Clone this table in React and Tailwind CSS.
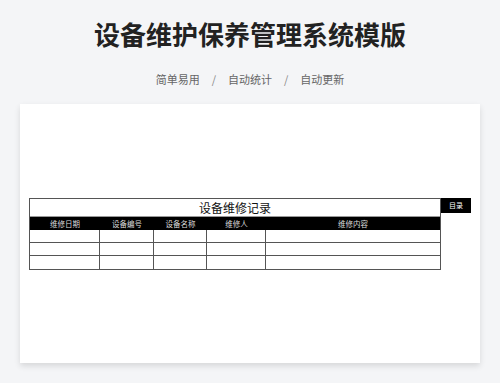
const cols = ["维修日期", "设备编号", "设备名称", "维修人", "维修内容"];
const widths = ["w-[70px]", "w-[54px]", "w-[53px]", "w-[59px]", "flex-1"];

export default function App() {
  return (
    <div
      className="w-[500px] h-[383px] bg-[#f4f5f7] overflow-hidden flex flex-col items-center"
      style={{ fontFamily: '"Noto Sans CJK SC", "Noto Sans", sans-serif' }}
    >
      <h1 className="mt-[16px] text-[26px] leading-[36px] font-bold text-[#222]">
        设备维护保养管理系统模版
      </h1>
      <div className="mt-[19px] flex items-center text-[11px] leading-[16px] text-[#666]">
        <span>简单易用</span>
        <span className="mx-[12px] text-[#888]">/</span>
        <span>自动统计</span>
        <span className="mx-[12px] text-[#888]">/</span>
        <span>自动更新</span>
      </div>
      <div className="mt-[17px] w-[460px] h-[259px] bg-white shadow-[0_3px_6px_rgba(0,0,0,0.12)] pt-[94px] pl-[9px] flex items-start">
        <div className="w-[412px] border border-[#555] flex flex-col">
          <div className="h-[18px] flex items-center justify-center text-[12px] text-[#111] border-b border-[#999]">
            设备维修记录
          </div>
          <div className="h-[13px] bg-black flex text-[7.5px] text-[#ddd]">
            {cols.map((c, i) => (
              <div key={c} className={`${widths[i]} flex items-center justify-center`}>
                {c}
              </div>
            ))}
          </div>
          {[0, 1, 2].map((r) => (
            <div key={r} className={`h-[13px] flex ${r < 2 ? "border-b border-[#555]" : ""}`}>
              {cols.map((c, i) => (
                <div
                  key={c}
                  className={`${widths[i]} ${i < 4 ? "border-r border-[#555]" : ""}`}
                />
              ))}
            </div>
          ))}
        </div>
        <div className="w-[30px] h-[15px] bg-black text-white text-[7px] flex items-center justify-center">
          目录
        </div>
      </div>
    </div>
  );
}
